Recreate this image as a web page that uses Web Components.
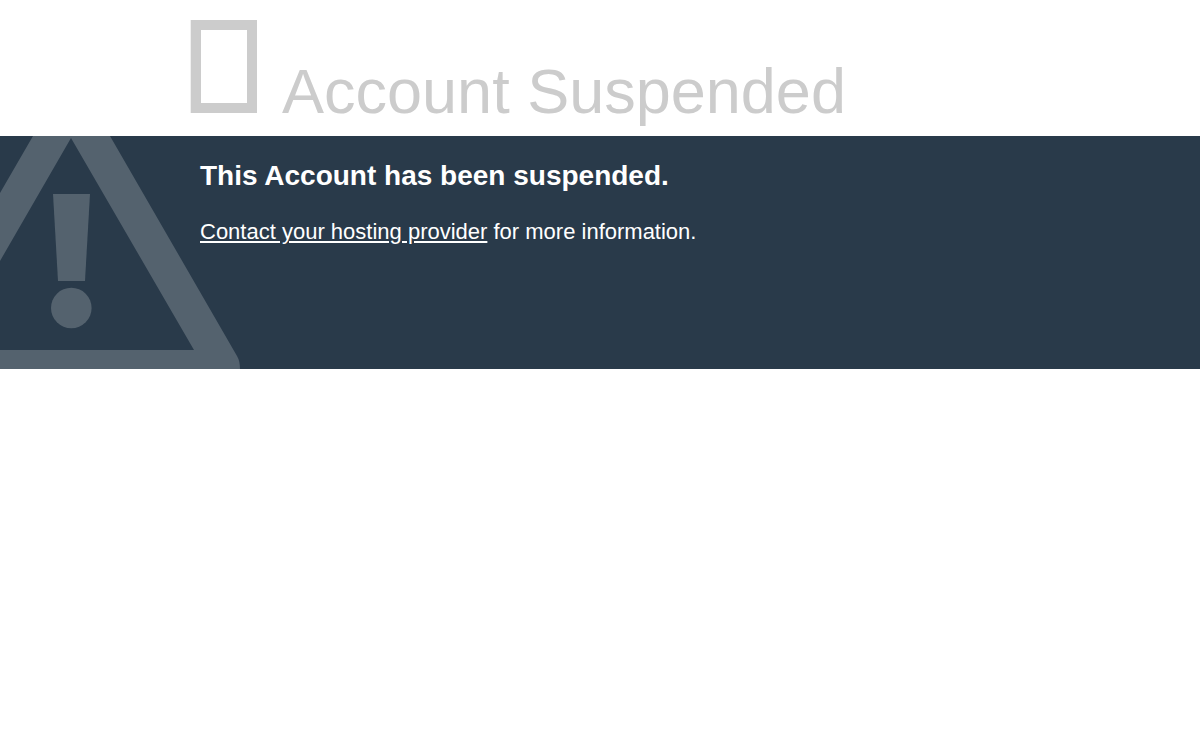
<!DOCTYPE html>
<html lang="en">
<head>
<meta charset="utf-8">
<meta name="viewport" content="width=device-width, initial-scale=1">
<title>Account Suspended</title>
<style>
    body {
        margin: 0;
        background-color: #fff;
        color: #fff;
        font-family: "Liberation Sans", Arial, Helvetica, sans-serif;
        font-size: 22px;
        line-height: 32px;
    }
</style>
</head>
<body>
<suspended-page></suspended-page>

<script>
class StatusHeader extends HTMLElement{
    constructor(){
        super();
        this.shadowDOM = this.attachShadow({mode: "open"});
    }

    connectedCallback(){
        this.render();
    }

    render(){
        this.shadowDOM.innerHTML = `
        <style>
            :host {
                display: block;
                color: #ccc;
            }

            .container {
                display: flex;
                align-items: baseline;
                gap: 25px;
                box-sizing: border-box;
                max-width: 820px;
                margin: 0 auto;
                padding: 20px 0 9px;
            }

            svg {
                flex: none;
                width: 67px;
                height: 93px;
            }

            h1 {
                margin: 0;
                font-size: 63px;
                line-height: 72px;
                font-weight: normal;
            }
        </style>
        <div class="container">
            <svg viewBox="0 0 67 93" aria-hidden="true">
                <path fill="currentColor" fill-rule="evenodd" d="M.7 0H67v93H.7zM11 10v73h46V10z"/>
            </svg>
            <h1><slot></slot></h1>
        </div>
        `;
    }
}

class StatusNotice extends HTMLElement{
    constructor(){
        super();
        this.shadowDOM = this.attachShadow({mode: "open"});
    }

    connectedCallback(){
        this.render();
    }

    render(){
        this.shadowDOM.innerHTML = `
        <style>
            :host {
                display: block;
                position: relative;
                overflow: hidden;
                background-color: #293a4a;
            }

            /* warning sign behind the text */
            svg {
                position: absolute;
                top: 0;
                left: 0;
                width: 240px;
                height: 233px;
            }

            .container {
                position: relative;
                box-sizing: border-box;
                max-width: 800px;
                min-height: 233px;
                margin: 0 auto;
                padding: 24px 0;
            }

            h2 {
                margin: 0 0 24px;
                font-size: 28px;
                line-height: 32px;
            }

            p {
                margin: 0;
            }
        </style>
        <svg viewBox="0 0 240 233" aria-hidden="true">
            <g fill="#54626e">
                <path d="M33 0h77L237 220q3 5 3 13H0V214H194L71 2 0 125V57z"/>
                <path d="M53 58h37l-5 87H58z"/>
                <circle cx="71.3" cy="172" r="20.3"/>
            </g>
        </svg>
        <div class="container">
            <h2><slot name="title"></slot></h2>
            <p><slot></slot></p>
        </div>
        `;
    }
}

class SuspendedPage extends HTMLElement{
    constructor(){
        super();
        this.shadowDOM = this.attachShadow({mode: "open"});
    }

    connectedCallback(){
        this.render();
    }

    render(){
        this.shadowDOM.innerHTML = `
        <style>
            :host {
                display: block;
            }

            a {
                color: inherit;
                text-decoration: underline;
            }
        </style>
        <status-header>Account Suspended</status-header>
        <status-notice>
            <span slot="title">This Account has been suspended.</span>
            <a href="#">Contact your hosting provider</a> for more information.
        </status-notice>
        `;
    }
}

customElements.define("status-header", StatusHeader);
customElements.define("status-notice", StatusNotice);
customElements.define("suspended-page", SuspendedPage);
</script>
</body>
</html>
